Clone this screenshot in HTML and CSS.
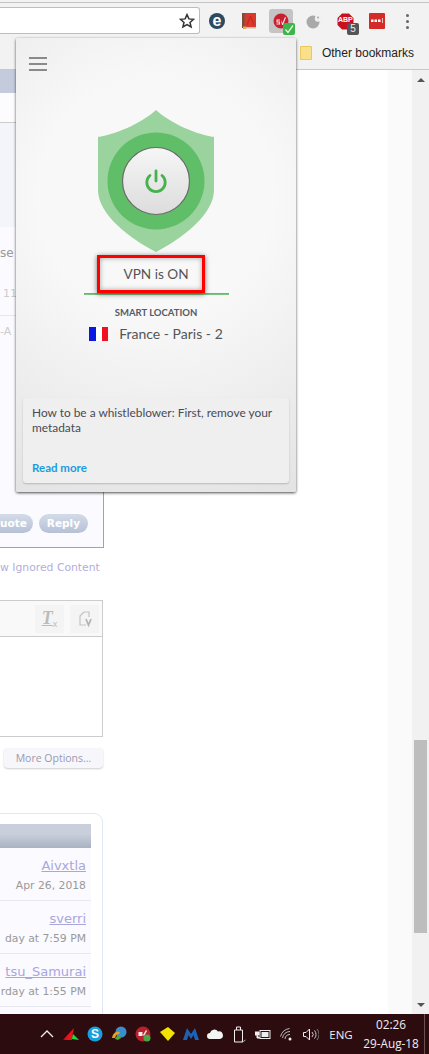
FILE: index.html
```html
<!DOCTYPE html>
<html>
<head>
    <title>VPN is ON</title>
    <meta name="viewport" content="width=device-width, initial-scale=1">
    <link rel="stylesheet" href="styles.css">
</head>
<body>
    <div class="top-edge"></div>
    <div class="toolbar">
        <div class="omnibox">
            <svg class="star" width="16" height="16" viewBox="0 0 16 16"><path d="M8 1.600l1.900 4.300 4.700.4-3.600 3.100 1.100 4.600L8 11.600 3.900 14l1.100-4.600-3.600-3.100 4.700-.4z" fill="none" stroke="#333" stroke-width="1.500"/></svg>
        </div>
        <div class="ext-icons">
            <div class="ext">
                <svg width="16" height="16" viewBox="0 0 16 16"><circle cx="8" cy="8" r="8" fill="#2b4a60"/><text x="8" y="12.500" class="ext-e">e</text></svg>
            </div>
            <div class="ext">
                <svg width="14" height="16" viewBox="0 0 14 16"><rect x="2" y="0" width="12" height="14" fill="#d8392c"/><rect x="0" y="0" width="2.500" height="15" fill="#74503f"/><rect x="2" y="14" width="12" height="1.500" fill="#d9b8a8"/><rect x="1" y="13.500" width="3" height="2.500" fill="#e0b030"/><path d="M5 12l3.500-9 3.500 9" fill="none" stroke="#b82a20"/></svg>
            </div>
            <div class="ext ext-active">
                <svg width="17" height="17" viewBox="0 0 17 17"><circle cx="8" cy="8" r="7.500" fill="#c9202f"/><path d="M3.500 6.500h3.500v1h-2.500v1h2.500v3h-3.500v-1h2.500v-1h-2.500zM8 7l1.500 3 2.500-6 1 .5-3 7.500h-1z" fill="#f2e8e8"/></svg>
                <span class="check-badge">
                    <svg width="11" height="10" viewBox="0 0 11 10"><path d="M1.500 5.500l2.500 3 5-7" fill="none" stroke="#e8f8d8" stroke-width="1.300"/></svg>
                </span>
            </div>
            <div class="ext">
                <svg width="15" height="15" viewBox="0 0 15 15"><circle cx="7" cy="8" r="6.500" fill="#a9a9a9"/><circle cx="12" cy="4.500" r="3.200" fill="#f0f0f0"/><circle cx="12" cy="3.500" r="1" fill="#a9a9a9"/></svg>
            </div>
            <div class="ext">
                <svg width="17" height="17" viewBox="0 0 17 17"><path d="M5 0.500h7l4.500 4.500v7L12 16.500H5L0.500 12V5z" fill="#c9101e"/></svg>
                <span class="abp-text">ABP</span>
                <span class="abp-badge">5</span>
            </div>
            <div class="ext">
                <svg width="16" height="16" viewBox="0 0 16 16"><rect width="16" height="16" rx="1" fill="#d42b27"/><rect x="2" y="6.500" width="2.500" height="2.500" fill="#fff"/><rect x="5.500" y="6.500" width="2.500" height="2.500" fill="#fff"/><rect x="9" y="6.500" width="2.500" height="2.500" fill="#fff"/><rect x="13" y="5" width="1" height="5" fill="#f3b5b3"/></svg>
            </div>
            <div class="ext ext-menu">
                <div class="menu-dots"><i></i><i></i><i></i></div>
            </div>
        </div>
    </div>

    <div class="bookmarks">
        <svg width="12" height="14" viewBox="0 0 12 14"><path d="M.5.500h11v13H.5z" fill="#fbe08a" stroke="#e8c860"/></svg>
        <span>Other bookmarks</span>
    </div>

    <div class="main">
        <div class="page">
            <div class="post">
                <div class="post-head"></div>
                <div class="post-sub"></div>
                <div class="post-body"></div>
                <div class="post-rule"></div>
                <div class="frag frag-se">se</div>
                <div class="frag frag-11">11</div>
                <div class="frag frag-a">-A</div>
                <div class="post-actions">
                    <span class="pill pill-quote">uote</span>
                    <span class="pill">Reply</span>
                </div>
            </div>
            <div class="ignored">w Ignored Content</div>

            <div class="editor">
                <div class="editor-tools">
                    <div class="tool"><span class="tool-t">T</span><span class="tool-x">x</span></div>
                    <div class="tool">
                        <svg width="14" height="16" viewBox="0 0 14 16"><path d="M6 1h5v5M6 1L2 5v9h6" fill="none" stroke="#c4c4c4" stroke-width="1.200"/><path d="M8 8l2.500 6L13 8" fill="none" stroke="#b4b4b4" stroke-width="1.800"/></svg>
                    </div>
                </div>
                <div class="editor-area"></div>
            </div>
            <div class="editor-foot"><span class="more-btn">More Options...</span></div>

            <div class="sidebar-box">
                <div class="sidebar-head"></div>
                <div class="sidebar-row">
                    <a class="row-name">Aivxtla</a>
                    <span class="row-date">Apr 26, 2018</span>
                </div>
                <div class="sidebar-row">
                    <a class="row-name">sverri</a>
                    <span class="row-date">day at 7:59 PM</span>
                </div>
                <div class="sidebar-row">
                    <a class="row-name">tsu_Samurai</a>
                    <span class="row-date">rday at 1:55 PM</span>
                </div>
                <div class="sidebar-row"></div>
            </div>
        </div>
        <div class="scrollbar">
            <div class="scroll-up"></div>
            <div class="scroll-thumb"></div>
            <div class="scroll-arrow"></div>
        </div>
    </div>

    <div class="taskbar">
        <span class="tray"><svg width="14" height="8" viewBox="0 0 14 8"><path d="M1 7l6-6 6 6" fill="none" stroke="#eee" stroke-width="1.300"/></svg></span>
        <span class="tray"><svg width="17" height="14" viewBox="0 0 17 14"><path d="M0 13L11 1l-2 9z" fill="#e8141c"/><path d="M9 13h-8l9-5z" fill="#e8141c"/><path d="M10 7l6 6-7-1z" fill="#16e03a"/></svg></span>
        <span class="tray"><svg width="16" height="16" viewBox="0 0 16 16"><circle cx="8" cy="8" r="7.500" fill="#16a0e0"/><text x="8" y="12" class="tray-s">S</text></svg></span>
        <span class="tray"><svg width="17" height="16" viewBox="0 0 17 16"><circle cx="10" cy="6" r="5.500" fill="#3a8ed0"/><path d="M1 12c1-6 5-7 8-6l-1 2c-2 0-3 1-4 4z" fill="#e8a020"/><path d="M4 13c1-3 3-4 5-4l1 3-3 2z" fill="#48a838"/></svg></span>
        <span class="tray"><svg width="16" height="16" viewBox="0 0 16 16"><circle cx="8" cy="8" r="7.500" fill="#b9202c"/><path d="M3.500 6h4v4h-4zM8 9l3-5 1 1-3 5z" fill="#eee"/><circle cx="12" cy="12" r="3.500" fill="#4aa84a"/></svg></span>
        <span class="tray"><svg width="15" height="14" viewBox="0 0 15 14"><path d="M0 5l8-5 7 6-7 8z" fill="#f2e400"/></svg></span>
        <span class="tray"><svg width="16" height="14" viewBox="0 0 16 14"><path d="M0 13L4 1l4 6 4-6 4 12h-4L10.500 8 8 12 5.500 8 4 13z" fill="#1a62b8"/></svg></span>
        <span class="tray"><svg width="16" height="10" viewBox="0 0 16 10"><path d="M3 10a3 3 0 0 1 0-6 4.500 4.500 0 0 1 8-1.500A3.800 3.800 0 0 1 13 10z" fill="#f4f4f4"/></svg></span>
        <span class="tray"><svg width="13" height="17" viewBox="0 0 13 17"><path d="M3.500 4V1h4v3M1.500 4h8v12h-8z" fill="none" stroke="#eee"/><path d="M8 15l1.500 1 3-2" fill="none" stroke="#aaa"/></svg></span>
        <span class="tray"><svg width="16" height="12" viewBox="0 0 16 12"><rect x="5" y="2.500" width="10" height="8" fill="none" stroke="#eee"/><rect x="6.500" y="4" width="7" height="5" fill="#eee"/><path d="M0 4h4v3H0zM2 7v3h3" fill="#eee" stroke="#eee"/></svg></span>
        <span class="tray"><svg width="14" height="13" viewBox="0 0 14 13"><g fill="none" stroke="#bbb"><path d="M0.500 8.500A11 11 0 0 1 9.500 .5"/><path d="M2.500 10A8 8 0 0 1 10 3.500"/><path d="M5 11a5 5 0 0 1 5-4.500"/></g><circle cx="10" cy="11" r="1.500" fill="#eee"/></svg></span>
        <span class="tray"><svg width="16" height="13" viewBox="0 0 16 13"><path d="M.5 4.500h2.500L6.500 1v11L3 8.500H.5z" fill="none" stroke="#eee"/><path d="M9 4a3.500 3.500 0 0 1 0 5M11.500 2.500a6 6 0 0 1 0 8" fill="none" stroke="#ccc"/><path d="M14 1a9 9 0 0 1 0 11" fill="none" stroke="#777"/></svg></span>
        <span class="tray-lang">ENG</span>
        <div class="tray-clock">
            <span>02:26</span>
            <span>29-Aug-18</span>
        </div>
        <div class="show-desktop"></div>
    </div>

    <div class="popup">
        <div class="hamburger"><i></i><i></i><i></i></div>
        <div class="shield-wrap">
            <svg class="shield" width="116" height="142" viewBox="0 0 116 142">
                <defs>
                    <linearGradient id="btn-grad" x1="0" y1="0" x2="0" y2="1">
                        <stop offset="0" stop-color="#f6f6f6"/>
                        <stop offset="1" stop-color="#dcdcdc"/>
                    </linearGradient>
                </defs>
                <path d="M58 0C70 11 93 23 116 27V80C116 104 85 128 58 142C31 128 0 104 0 80V27C23 23 46 11 58 0Z" fill="#9bd39e"/>
                <circle cx="58" cy="71" r="48.500" fill="#60be68"/>
                <circle cx="58" cy="71" r="33.500" fill="url(#btn-grad)" stroke="#6a6a6a" stroke-width="1.200"/>
                <path d="M52 65.500a9.200 9.200 0 1 0 12 0" fill="none" stroke="#47b14e" stroke-width="2.800" stroke-linecap="round"/>
                <path d="M58 61v10" fill="none" stroke="#47b14e" stroke-width="2.800" stroke-linecap="round"/>
            </svg>
        </div>
        <div class="status-row">
            <div class="status-text">VPN is ON</div>
            <div class="status-mark"></div>
        </div>
        <div class="status-line"></div>
        <div class="location-label">SMART LOCATION</div>
        <div class="location">
            <span class="flag"><i class="flag-blue"></i><i class="flag-white"></i><i class="flag-red"></i></span>
            <span>France - Paris - 2</span>
        </div>
        <div class="news">
            <div class="news-title">How to be a whistleblower: First, remove your metadata</div>
            <a class="news-link">Read more</a>
        </div>
    </div>
</body>
</html>
```

FILE: styles.css
```css
html, body {
    margin: 0;
    padding: 0;
}
body {
    width: 429px;
    height: 1054px;
    overflow: hidden;
    position: relative;
    display: flex;
    flex-direction: column;
    background-color: #fff;
    font-family: "Open Sans", "Liberation Sans", sans-serif;
    color: #333;
}

/* browser chrome */
.top-edge {
    height: 2px;
    background-color: #f2f2f2;
}
.toolbar {
    height: 35px;
    box-sizing: border-box;
    border-top: 1px solid #c4c4c4;
    background-color: #f2f2f2;
    display: flex;
    align-items: flex-start;
    padding-top: 4px;
}
.omnibox {
    width: 200px;
    height: 27px;
    box-sizing: border-box;
    background-color: #fff;
    border: 1px solid #bdbdbd;
    border-left: none;
    border-radius: 0 3px 3px 0;
    display: flex;
    align-items: center;
    justify-content: flex-end;
    padding-right: 4px;
}
.ext-icons {
    display: flex;
    margin: 2px 0 0 1px;
}
.ext {
    position: relative;
    width: 32px;
    height: 24px;
    display: flex;
    align-items: center;
    justify-content: center;
}
.ext-active {
    width: 24px;
    margin: 0 4px;
    background-color: #c4c4c4;
    border-radius: 3px;
}
.ext-menu {
    margin-left: -2px;
}
.ext-e {
    font-family: "Liberation Sans", sans-serif;
    font-size: 16px;
    font-weight: bold;
    fill: #fff;
    text-anchor: middle;
}
.check-badge {
    position: absolute;
    right: -2px;
    bottom: -2px;
    width: 12px;
    height: 12px;
    background-color: #3cb54a;
    border-radius: 2px;
    display: flex;
    align-items: center;
    justify-content: center;
}
.abp-text {
    position: absolute;
    left: 9px;
    top: 7px;
    font-family: "Liberation Sans", sans-serif;
    font-size: 7px;
    font-weight: bold;
    color: #fff;
}
.abp-badge {
    position: absolute;
    right: 2px;
    bottom: -2px;
    width: 12px;
    height: 12px;
    background-color: #555;
    border-radius: 2px;
    font-family: "Liberation Sans", sans-serif;
    font-size: 10px;
    line-height: 12px;
    text-align: center;
    color: #eee;
}
.menu-dots {
    display: flex;
    flex-direction: column;
    gap: 3px;
}
.menu-dots i {
    display: block;
    width: 3px;
    height: 3px;
    background-color: #666;
    border-radius: 50%;
}
.bookmarks {
    height: 33px;
    box-sizing: border-box;
    background-color: #f2f2f2;
    border-bottom: 1px solid #c8c8c8;
    display: flex;
    align-items: center;
    justify-content: flex-end;
    gap: 10px;
    padding-right: 15px;
    font-family: "Liberation Sans", sans-serif;
    font-size: 12px;
    color: #222;
}

/* web page behind the popup */
.main {
    flex: 1;
    display: flex;
    min-height: 0;
}
.page {
    flex: 1;
    min-width: 0;
    overflow: hidden;
    font-family: "DejaVu Sans", sans-serif;
}
.post {
    width: 104px;
    height: 478px;
    box-sizing: border-box;
    background-color: #fafaff;
    border-right: 1px solid #9d9dd6;
    border-bottom: 1px solid #9d9dd6;
    position: relative;
}
.post-head {
    height: 23px;
    background-color: #c4cbdc;
}
.post-sub {
    height: 30px;
    box-sizing: border-box;
    background-color: #fcfcff;
    border-bottom: 1px solid #ccc;
}
.post-body {
    height: 104px;
    background-color: #f4f5fb;
}
.post-rule {
    position: absolute;
    left: 0;
    right: 0;
    top: 245px;
    height: 1px;
    background-color: #e6e6ee;
}
.frag {
    position: absolute;
    left: 0;
    color: #ccc;
    font-size: 11px;
}
.frag-se { top: 176px; color: #999; font-size: 12px; }
.frag-11 { top: 217px; left: 3px; }
.frag-a { top: 255px; }
.post-actions {
    position: absolute;
    left: 0;
    right: 15px;
    bottom: 14px;
    display: flex;
    justify-content: space-between;
}
.pill {
    height: 19px;
    padding: 0 8px;
    border-radius: 10px;
    background: linear-gradient(#d4dbe8, #b6c1d6);
    color: #fff;
    font-size: 10.500px;
    font-weight: bold;
    line-height: 18px;
}
.pill-quote {
    width: 33px;
    box-sizing: border-box;
    padding: 0 8px 0 0;
    border-radius: 0 10px 10px 0;
    text-align: right;
}
.ignored {
    height: 52px;
    width: 103px;
    overflow: hidden;
    white-space: nowrap;
    box-sizing: border-box;
    font-size: 10.800px;
    line-height: 40px;
    color: #b3aedb;
}
.editor {
    width: 103px;
    height: 137px;
    box-sizing: border-box;
    border: 1px solid #ccc;
    border-left: none;
}
.editor-tools {
    height: 36px;
    box-sizing: border-box;
    border-bottom: 1px solid #ccc;
    background-color: #f9f9f9;
    display: flex;
    justify-content: flex-end;
    align-items: center;
    gap: 6px;
    padding-right: 3px;
}
.tool {
    width: 29px;
    height: 28px;
    background-color: #f4f4f4;
    display: flex;
    align-items: center;
    justify-content: center;
    font-family: "Liberation Serif", serif;
    color: #bbb;
}
.tool-t {
    font-size: 18px;
    font-style: italic;
    font-weight: bold;
    text-decoration: underline;
}
.tool-x {
    font-family: "Liberation Sans", sans-serif;
    font-size: 9px;
    margin-top: 10px;
}
.editor-foot {
    width: 103px;
    height: 76px;
    display: flex;
    justify-content: flex-end;
    align-items: flex-start;
    padding-top: 11px;
    box-sizing: border-box;
}
.more-btn {
    width: 99px;
    height: 20px;
    border-radius: 4px;
    background-color: #f6f6fb;
    box-shadow: 0 1px 2px rgba(0, 0, 0, 0.2);
    font-family: "Open Sans", sans-serif;
    font-size: 10.500px;
    line-height: 20px;
    text-align: center;
    color: #9a9ab0;
}
.sidebar-box {
    width: 103px;
    height: 230px;
    box-sizing: border-box;
    padding: 10px 11px 0 0;
    border: 1px solid #dfe8f4;
    border-left: none;
    border-radius: 0 9px 0 0;
}
.sidebar-head {
    height: 24px;
    background: linear-gradient(#c9d0dc 40%, #a9b2c2);
}
.sidebar-row {
    height: 53px;
    box-sizing: border-box;
    background-color: #fafaff;
    border-bottom: 1px solid #e8e8f0;
    display: flex;
    flex-direction: column;
    align-items: flex-end;
    padding: 8px 5px 0 0;
    white-space: nowrap;
}
.row-name {
    font-size: 13px;
    line-height: 20px;
    color: #a9a6dd;
    text-decoration: underline;
}
.row-date {
    font-size: 10.800px;
    line-height: 18px;
    margin-top: 1px;
    color: #999;
}
.scrollbar {
    width: 17px;
    border-left: 24px solid #fafafa;
    background-color: #f1f1f1;
    position: relative;
}
.scroll-thumb {
    position: absolute;
    left: 2px;
    right: 2px;
    top: 670px;
    height: 193px;
    background-color: #bdbdbd;
}
.scroll-up {
    position: absolute;
    right: 4px;
    top: 8px;
    border-left: 4px solid transparent;
    border-right: 4px solid transparent;
    border-bottom: 4px solid #555;
}
.scroll-arrow {
    position: absolute;
    right: 4px;
    bottom: 7px;
    border-left: 4px solid transparent;
    border-right: 4px solid transparent;
    border-top: 4px solid #555;
}

/* taskbar */
.taskbar {
    height: 40px;
    box-sizing: border-box;
    background-color: #2d0c10;
    display: flex;
    align-items: center;
    justify-content: flex-end;
    padding-right: 4px;
    font-family: "Open Sans", sans-serif;
    color: #eee;
}
.tray {
    width: 24px;
    display: flex;
    align-items: center;
    justify-content: center;
}
.tray-s {
    font-family: "Liberation Sans", sans-serif;
    font-size: 12px;
    font-weight: bold;
    fill: #fff;
    text-anchor: middle;
}
.tray-lang {
    width: 36px;
    font-size: 11.500px;
    text-align: center;
}
.tray-clock {
    width: 56px;
    margin-left: 4px;
    display: flex;
    flex-direction: column;
    align-items: center;
    gap: 4px;
    font-size: 11.800px;
    line-height: 15px;
    white-space: nowrap;
}
.show-desktop {
    width: 1px;
    height: 100%;
    margin-left: 5px;
    background-color: #6a5050;
}

/* vpn popup */
.popup {
    position: absolute;
    left: 16px;
    top: 38px;
    width: 280px;
    height: 454px;
    box-sizing: border-box;
    background: radial-gradient(ellipse 120% 75% at 50% 35%, #f8f8f8 35%, #e2e2e2 100%);
    border-radius: 2px;
    box-shadow: 0 1px 3px rgba(0, 0, 0, 0.7);
    display: flex;
    flex-direction: column;
    align-items: center;
    font-family: "Lato", "Open Sans", sans-serif;
    color: #555;
}
.hamburger {
    align-self: flex-start;
    margin: 19px 0 0 13px;
    display: flex;
    flex-direction: column;
    gap: 4px;
}
.hamburger i {
    display: block;
    width: 18px;
    height: 2px;
    background-color: #8a8a8a;
}
.shield-wrap {
    margin-top: 39px;
    line-height: 0;
}
.status-row {
    position: relative;
    align-self: stretch;
    margin-top: 3px;
    height: 38px;
    display: flex;
    align-items: center;
    justify-content: center;
}
.status-text {
    font-size: 13.600px;
    color: #555;
}
.status-mark {
    position: absolute;
    left: 81px;
    top: 0;
    bottom: 0;
    width: 108px;
    box-sizing: border-box;
    border: 3px solid #f00;
    box-shadow: 0 1px 5px rgba(0, 0, 0, 0.55), inset 0 0 5px rgba(0, 0, 0, 0.35);
}
.status-line {
    width: 145px;
    height: 1px;
    background-color: #63bb68;
    border-bottom: 1px solid #7dc681;
}
.location-label {
    margin-top: 12px;
    font-size: 9.500px;
    font-weight: bold;
    color: #555b66;
}
.location {
    display: flex;
    align-items: center;
    gap: 11px;
    margin-top: 7px;
    font-size: 14px;
}
.flag {
    display: flex;
    width: 19px;
    height: 14px;
}
.flag i {
    flex: 1;
}
.flag-blue { background-color: #0a18e0; }
.flag-white { background-color: #fff; }
.flag-red { background-color: #f01020; }
.news {
    align-self: stretch;
    margin: auto 7px 9px;
    height: 85px;
    box-sizing: border-box;
    padding: 7px 9px 0;
    background-color: #efefef;
    border-radius: 3px;
    box-shadow: 0 1px 2px rgba(0, 0, 0, 0.2);
    display: flex;
    flex-direction: column;
    justify-content: space-between;
    font-size: 11.900px;
    line-height: 15px;
}
.news-title {
    color: #4a4a55;
}
.news-link {
    margin-bottom: 8px;
    font-size: 11.500px;
    color: #1c9ce0;
    font-weight: bold;
}
```
